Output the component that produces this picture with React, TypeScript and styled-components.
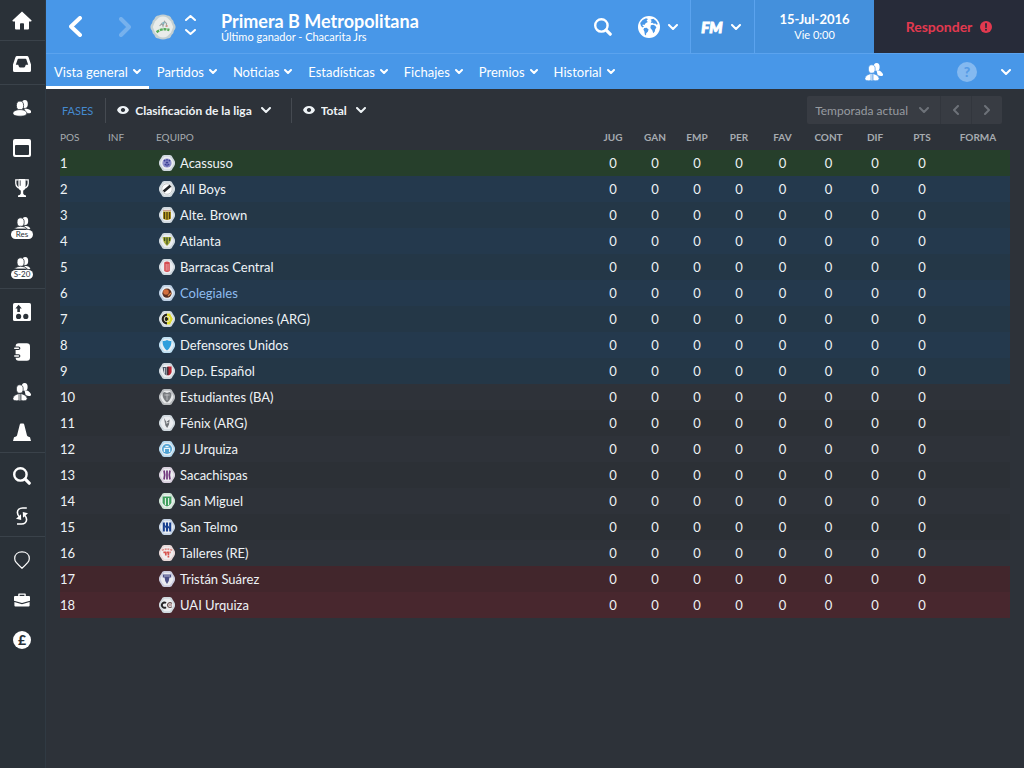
import React from "react";
import styled, { createGlobalStyle, css } from "styled-components";

const color = {
  page: "#2d3239",
  side: "#2a3138",
  line: "#3a424a",
  blue: "#4897e8",
  blueDeep: "#4490dc",
  blueLine: "#5ba3ee",
  ink: "#272b39",
  alert: "#e2394f",
  text: "#eef3f6",
  muted: "#a6abb0",
};

const Global = createGlobalStyle`
  * { box-sizing: border-box; }
  html { background: ${color.page}; }
  body { margin: 0; font-family: Lato, "Liberation Sans", sans-serif; font-size: 13px; color: ${color.text}; }
  button, select { font: inherit; color: inherit; background: none; border: 0; padding: 0; margin: 0; }
  svg { display: block; flex: none; }
`;

const Page = styled.div`
  display: flex;
  min-height: 100vh;
`;

/* ---------- sidebar ---------- */

const Sidebar = styled.nav`
  width: 46px;
  flex: none;
  background: ${color.side};
  border-right: 1px solid #303a43;
`;

const SideGroup = styled.div<{ $first?: boolean; $last?: boolean }>`
  padding-top: ${(p) => (p.$first ? 0 : 3)}px;
  border-bottom: ${(p) => (p.$last ? "0" : `1px solid ${color.line}`)};
`;

const SideButton = styled.button`
  display: flex;
  flex-direction: column;
  align-items: center;
  justify-content: center;
  width: 44px;
  height: 40px;
  color: #fff;
`;

const SquadTag = styled.span`
  width: 22px;
  height: 9px;
  border-radius: 5px;
  background: #fff;
  color: ${color.side};
  font-size: 8px;
  line-height: 9px;
  text-align: center;
`;

/* ---------- header ---------- */

const Main = styled.div`
  flex: 1;
  min-width: 0;
`;

const TopBar = styled.header`
  display: flex;
  height: 54px;
  background: ${color.blue};
  border-bottom: 1px solid ${color.blueLine};
  color: #fff;
`;

const TitleArea = styled.div`
  display: flex;
  align-items: center;
  flex: 1;
  min-width: 0;
  padding-left: 4px;
`;

const IconButton = styled.button<{ $w: number; $faded?: boolean }>`
  display: flex;
  align-items: center;
  justify-content: center;
  gap: 8px;
  width: ${(p) => p.$w}px;
  height: 100%;
  flex: none;
  color: #fff;
  opacity: ${(p) => (p.$faded ? 0.25 : 1)};
`;

const Stepper = styled.div`
  display: flex;
  flex-direction: column;
  width: 28px;
  flex: none;
  padding-bottom: 3px;
`;

const StepButton = styled.button`
  display: flex;
  align-items: center;
  justify-content: center;
  height: 14px;
`;

const Titles = styled.div`
  padding-left: 17px;
  min-width: 0;
`;

const Title = styled.h1`
  margin: 0;
  font-size: 18px;
  line-height: 20px;
  font-weight: 700;
  white-space: nowrap;
`;

const Subtitle = styled.p`
  margin: 0;
  font-size: 11px;
  line-height: 12px;
  white-space: nowrap;
`;

const TopCell = styled.div<{ $w: number }>`
  width: ${(p) => p.$w}px;
  flex: none;
  background: ${color.blueDeep};
  border-left: 1px solid ${color.blueLine};
`;

const DateCell = styled(TopCell)`
  display: flex;
  flex-direction: column;
  align-items: center;
  justify-content: center;
  font-size: 11px;
  line-height: 15px;
`;

const DateText = styled.strong`
  font-size: 13px;
  font-weight: 700;
`;

const Respond = styled.button`
  display: flex;
  align-items: center;
  justify-content: center;
  gap: 8px;
  width: 150px;
  flex: none;
  && {
    background: ${color.ink};
    color: ${color.alert};
    font-size: 14px;
    font-weight: 700;
  }
`;

const TabBar = styled.nav`
  display: flex;
  height: 35px;
  background: ${color.blue};
  color: #fff;
`;

const Tabs = styled.div`
  display: flex;
  flex: 1;
`;

const Tab = styled.button<{ $active?: boolean }>`
  && {
    display: flex;
    align-items: center;
    gap: 5px;
    height: 35px;
    padding: 3px 8px 0;
    border-bottom: 3px solid ${(p) => (p.$active ? "#fff" : "transparent")};
    white-space: nowrap;
  }
`;

/* ---------- toolbar ---------- */

const Toolbar = styled.div`
  display: flex;
  align-items: center;
  height: 28px;
  margin: 7px 22px 2px 14px;
`;

const PhaseLink = styled.a`
  padding: 0 12px 0 2px;
  color: #4489cf;
  font-size: 11px;
  text-decoration: none;
`;

const Picker = styled.label`
  display: flex;
  align-items: center;
  gap: 6px;
  height: 25px;
  padding: 0 20px 0 11px;
  border-left: 1px solid #454a51;
`;

const Select = styled.select`
  appearance: none;
  field-sizing: content;
  && {
    padding-right: 3px;
    font-size: 12px;
    font-weight: 700;
  }
`;

const Season = styled.div`
  display: flex;
  height: 28px;
  margin-left: auto;
  border-radius: 2px;
  background: #383c43;
  color: #6d7279;
`;

const SeasonPicker = styled.label`
  display: flex;
  align-items: center;
  gap: 11px;
  padding: 0 11px 0 8px;
`;

const SeasonSelect = styled.select`
  appearance: none;
  field-sizing: content;
  && {
    color: #979ba0;
    font-size: 12px;
  }
`;

const SeasonStep = styled.button`
  display: flex;
  align-items: center;
  justify-content: center;
  width: 31px;
  && {
    border-left: 1px solid #32363d;
  }
`;

/* ---------- league table ---------- */

const TableWrap = styled.div`
  padding: 0 14px;
`;

const Table = styled.table`
  width: 100%;
  table-layout: fixed;
  border-collapse: collapse;
`;

const Th = styled.th<{ $left?: boolean; $w?: number }>`
  width: ${(p) => (p.$w ? `${p.$w}px` : "auto")};
  height: 24px;
  padding: 0 0 2px;
  color: ${color.muted};
  font-size: 10px;
  font-weight: ${(p) => (p.$left ? 400 : 700)};
  text-align: ${(p) => (p.$left ? "left" : "center")};
`;

type Zone = "up" | "playoff" | "mid" | "down";

const zoneRow = {
  up: css`background: #263f2b;`,
  playoff: css`
    background: #243747;
    &:nth-child(even) { background: #24394d; }
  `,
  mid: css`
    background: #2c3036;
    &:nth-child(even) { background: #2e3239; }
  `,
  down: css`
    background: #42262c;
    &:nth-child(even) { background: #48272e; }
  `,
};

const Row = styled.tr<{ $zone: Zone }>`
  ${(p) => zoneRow[p.$zone]}
`;

const Td = styled.td<{ $center?: boolean }>`
  height: 26px;
  padding: 0;
  text-align: ${(p) => (p.$center ? "center" : "left")};
`;

const TeamLink = styled.a<{ $own?: boolean }>`
  display: flex;
  align-items: center;
  gap: 5px;
  padding-left: 3px;
  color: ${(p) => (p.$own ? "#8fbdf0" : color.text)};
  text-decoration: none;
  white-space: nowrap;
`;

/* ---------- icons ---------- */

type IconProps = { w?: number; h?: number; box: string; children: React.ReactNode };
const Icon = ({ w = 18, h = 18, box, children }: IconProps) => (
  <svg width={w} height={h} viewBox={box} fill="currentColor" aria-hidden="true">{children}</svg>
);

type ChevronProps = { dir?: "down" | "up" | "left" | "right"; w?: number; h?: number; stroke?: number };
const Chevron = ({ dir = "down", w = 10, h = 6, stroke = 2 }: ChevronProps) => {
  const m = stroke / 2;
  const points = {
    down: `${m},${m} ${w / 2},${h - m} ${w - m},${m}`,
    up: `${m},${h - m} ${w / 2},${m} ${w - m},${h - m}`,
    left: `${w - m},${m} ${m},${h / 2} ${w - m},${h - m}`,
    right: `${m},${m} ${w - m},${h / 2} ${m},${h - m}`,
  };
  return (
    <svg width={w} height={h} viewBox={`0 0 ${w} ${h}`} fill="none" stroke="currentColor"
      strokeWidth={stroke} strokeLinecap="round" strokeLinejoin="round" aria-hidden="true">
      <polyline points={points[dir]} />
    </svg>
  );
};

const HomeIcon = () => (
  <Icon w={20} h={19} box="0 0 20 19">
    <path d="M10 0.4 L19.4 9.2 a0.8 0.8 0 0 1 -0.5 1.3 H17 V17.4 a1 1 0 0 1 -1 1 H12 V13 a0.8 0.8 0 0 0 -0.8 -0.8 H8.8 A0.8 0.8 0 0 0 8 13 V18.4 H4 a1 1 0 0 1 -1 -1 V10.5 H1.1 A0.8 0.8 0 0 1 0.6 9.2 Z" />
  </Icon>
);

const InboxIcon = () => (
  <Icon box="0 0 18 18">
    <path fillRule="evenodd" d="M4 1 H14 a1.6 1.6 0 0 1 1.5 1.1 L18 9.4 V15.4 a1.6 1.6 0 0 1 -1.6 1.6 H1.6 A1.6 1.6 0 0 1 0 15.4 V9.4 L2.5 2.1 A1.6 1.6 0 0 1 4 1 Z M5.4 3.8 a0.8 0.8 0 0 0 -0.7 0.5 L2.8 9.8 H5.2 L6 11.8 a1.2 1.2 0 0 0 1.1 0.8 H10.9 a1.2 1.2 0 0 0 1.1 -0.8 L12.8 9.8 H15.2 L13.3 4.3 a0.8 0.8 0 0 0 -0.7 -0.5 Z" />
  </Icon>
);

const UsersIcon = () => (
  <Icon box="0 0 18 16">
    <ellipse cx="11.8" cy="4" rx="3" ry="3.9" />
    <path d="M11.4 8.6 C15 8.6 18.2 10 18.2 11.8 C18.2 13 16 13.6 12.6 13.2 Z" />
    <g stroke={color.side} strokeWidth="0.8">
      <ellipse cx="7" cy="5.6" rx="3.6" ry="4.5" />
      <path d="M7 9.6 C10.6 9.6 13.8 11.2 13.8 13.2 C13.8 15.6 10 16.2 7 16.2 C3.4 16.2 -0.2 15.6 -0.2 13.2 C-0.2 11.2 3.4 9.6 7 9.6 Z" />
    </g>
  </Icon>
);

const SquadIcon = () => (
  <Icon w={18} h={13} box="0 0 18 13">
    <ellipse cx="12.2" cy="4" rx="3" ry="3.9" />
    <path d="M11 8.8 Q16.4 8.8 17.4 12 L13 12.4 Z" />
    <g stroke={color.side} strokeWidth="0.8">
      <ellipse cx="7.6" cy="5.2" rx="3.6" ry="4.4" />
      <path d="M1.4 12 Q3.4 9.2 7.6 9.2 Q12 9.2 14.4 12 Z" />
    </g>
  </Icon>
);

const ScoutIcon = ({ cut }: { cut: string }) => (
  <Icon box="0 0 18 18">
    <ellipse cx="11.6" cy="3.9" rx="3" ry="3.9" />
    <path d="M11.6 7.8 Q14.4 7 16.4 9 Q18.8 11.4 17.8 12.4 Q16 13.6 12.6 12 Z" />
    <g stroke={cut} strokeWidth="0.7">
      <ellipse cx="6.8" cy="6" rx="3.4" ry="4.2" />
      <path d="M6 10.4 V17.6 Q0 18.6 -0.2 15.4 Q0 12 6 10.4 Z" />
      <path d="M8 10.4 V17.6 Q14 18.6 14.2 15.4 Q14 12 8 10.4 Z" />
    </g>
    <path d="M6.9 11 V17.6" stroke="currentColor" strokeWidth="1" />
  </Icon>
);

const CalendarIcon = () => (
  <Icon box="0 0 18 18">
    <path fillRule="evenodd" d="M2 0 H16 a2 2 0 0 1 2 2 V16 a2 2 0 0 1 -2 2 H2 a2 2 0 0 1 -2 -2 V2 A2 2 0 0 1 2 0 Z M3 6 a1 1 0 0 0 -1 1 V15 a1 1 0 0 0 1 1 H15 a1 1 0 0 0 1 -1 V7 a1 1 0 0 0 -1 -1 Z" />
  </Icon>
);

const TrophyIcon = () => (
  <Icon w={14} h={18} box="0 0 14 18">
    <path d="M3.4 0 H10.6 V6.4 Q10.6 10.6 8.2 11.6 V14.4 Q8.4 15.6 11 16.6 V18 H3 V16.6 Q5.6 15.6 5.8 14.4 V11.6 Q3.4 10.6 3.4 6.4 Z" />
    <path d="M3.6 0.8 H0.8 V4.4 Q1.2 8.4 4.6 9.2 M10.4 0.8 H13.2 V4.4 Q12.8 8.4 9.4 9.2" fill="none" stroke="currentColor" strokeWidth="1.3" />
    <path d="M5.2 1.4 V6.8" stroke={color.side} strokeWidth="0.8" />
  </Icon>
);

const TacticsIcon = () => (
  <Icon box="0 0 18 18">
    <rect width="18" height="18" rx="1.6" />
    <g fill={color.side}>
      <path d="M5.6 1.8 L8.8 5.4 H6.9 V9 H4.3 V5.4 H2.4 Z" />
      <circle cx="5.6" cy="13.4" r="2.6" />
      <circle cx="12.8" cy="13.4" r="2.6" />
    </g>
  </Icon>
);

const NotebookIcon = () => (
  <Icon w={16} h={18} box="0 0 16 18">
    <rect x="1.6" y="0.3" width="14.4" height="17.4" rx="3.2" />
    <g fill={color.side}>
      <path d="M0.8 3.4 H4.6 a1.8 1.8 0 0 1 0 3.6 H0.8 Z M0.8 11.2 H4.6 a1.8 1.8 0 0 1 0 3.6 H0.8 Z" />
    </g>
    <path d="M0.8 5.2 H4.4 M0.8 13 H4.4" stroke="currentColor" strokeWidth="1.6" strokeLinecap="round" />
  </Icon>
);

const ConeIcon = () => (
  <Icon box="0 0 18 18">
    <path d="M6.8 1.4 Q7 0.6 7.8 0.6 H10.2 Q11 0.6 11.2 1.4 L14 12.6 Q14.2 13.2 15 13.4 L17 14.2 L18 18 H0 L1 14.2 L3 13.4 Q3.8 13.2 4 12.6 Z" />
  </Icon>
);

const SearchIcon = () => (
  <Icon box="0 0 18 18">
    <g fill="none" stroke="currentColor">
      <circle cx="7.4" cy="7.4" r="6.2" strokeWidth="2.4" />
      <path d="M12.2 12.2 L16.2 16.2" strokeWidth="3.2" strokeLinecap="round" />
    </g>
  </Icon>
);

const SwapIcon = () => (
  <Icon w={12} h={18} box="0 0 12 18">
    <g fill="none" stroke="currentColor" strokeWidth="1.6">
      <path d="M10.8 1 H6.6 C3.2 1 1.4 3.2 1.4 5.4 C1.4 7.2 2.2 8.6 3.6 10" />
      <path d="M1 17 H5.4 C8.8 17 10.6 14.8 10.6 12.6 C10.6 10.8 9.8 9.4 8.4 8" />
    </g>
    <path d="M0 11.8 L5 7.2 L5.2 13 Z M12 6.2 L7 10.8 L6.8 5 Z" />
  </Icon>
);

const PinIcon = () => (
  <Icon w={16} h={18} box="0 0 16 18">
    <path d="M8 17.2 Q5.4 15 2.2 11.4 Q0.7 9.6 0.7 7.4 C0.7 3.4 3.8 0.9 8 0.9 C12.2 0.9 15.3 3.4 15.3 7.4 Q15.3 9.6 13.8 11.4 Q10.6 15 8 17.2 Z" fill="none" stroke="currentColor" strokeWidth="1.2" />
  </Icon>
);

const BriefcaseIcon = () => (
  <Icon w={16} h={14} box="0 0 16 14">
    <path fillRule="evenodd" d="M5 0.4 H11 a0.8 0.8 0 0 1 0.8 0.8 V3 H15 a1 1 0 0 1 1 1 V7.8 L8 10 L0 7.8 V4 a1 1 0 0 1 1 -1 H4.2 V1.2 A0.8 0.8 0 0 1 5 0.4 Z M5.6 1.8 V3 H10.4 V1.8 Z" />
    <path d="M0.4 9 L8 11.2 L15.6 9 V12.6 a1 1 0 0 1 -1 1 H1.4 a1 1 0 0 1 -1 -1 Z" />
  </Icon>
);

const Coin = styled.span`
  width: 18px;
  height: 18px;
  border-radius: 50%;
  background: #fff;
  color: ${color.side};
  font-size: 14px;
  line-height: 18px;
  font-weight: 900;
  text-align: center;
`;

const GlobeIcon = () => (
  <Icon w={22} h={22} box="0 0 22 22">
    <circle cx="11" cy="11" r="11" />
    <g fill={color.blue}>
      <path d="M2.2 7 L4.6 4 L8 2.2 L10 3 L8.6 4.6 L9.8 6 L7.6 7.2 L6.4 9 L4.8 8.4 L4.4 9.6 L6 10.6 L4.6 11.6 L3 10 Z" />
      <path d="M6.2 12 L8.6 11.8 L10.6 13.4 L9.8 15.8 L8.2 17.2 L8 19.6 L6.8 18.6 L6.4 15.4 L5.4 13.6 Z" />
      <path d="M12.6 3.4 L15.4 2.8 L18.2 5 L19.8 8 L18.8 8.8 L17.4 7.4 L15.8 7.8 L14.4 6.8 L12.8 7 L13.6 5 Z" />
      <path d="M12.8 9.2 L15.2 8.8 L17.2 9.8 L18.4 11.6 L17.2 13.2 L16.8 15.6 L15.2 17.2 L14.4 14.4 L12.4 12 Z" />
    </g>
  </Icon>
);

const Brand = styled.span`
  font-size: 15px;
  line-height: 16px;
  font-weight: 900;
  font-style: italic;
  -webkit-text-stroke: 1px #fff;
`;

const EyeIcon = () => (
  <Icon w={12} h={8} box="0 0 12 8">
    <path fillRule="evenodd" d="M6 0 Q10.4 0 12 4 Q10.4 8 6 8 Q1.6 8 0 4 Q1.6 0 6 0 Z M6 1.9 a2.1 2.1 0 1 0 0.01 0 Z" />
  </Icon>
);

const AlertIcon = () => (
  <Icon w={12} h={12} box="0 0 12 12">
    <circle cx="6" cy="6" r="6" />
    <path d="M5 2.2 H7 L6.7 7 H5.3 Z" fill={color.ink} />
    <circle cx="6" cy="8.8" r="1" fill={color.ink} />
  </Icon>
);

const HelpDot = styled.span`
  width: 20px;
  height: 20px;
  border-radius: 50%;
  background: #84b9f0;
  color: #559be6;
  font-size: 14px;
  line-height: 20px;
  font-weight: 900;
`;

const LeagueBadge = () => (
  <svg width="26" height="26" viewBox="0 0 26 26" aria-hidden="true">
    <path d="M8.6 1.4 Q13 -0.6 17.4 1.4 Q20.6 1.4 21.6 5 Q24 6.6 23.8 9 Q27.4 13 23.8 17 Q24 19.4 21.6 21 Q20.6 24.6 17.4 24.6 Q13 26.6 8.6 24.6 Q5.4 24.6 4.4 21 Q2 19.4 2.2 17 Q-1.4 13 2.2 9 Q2 6.6 4.4 5 Q5.4 1.4 8.6 1.4 Z" fill="#c3cfd1" />
    <path d="M9 3.4 Q13 1.6 17 3.4 L21 7.4 L23.2 13 L21 18.6 L17 22.6 Q13 24.4 9 22.6 L5 18.6 L2.8 13 L5 7.4 Z" fill="#e9ecea" />
    <path d="M6.6 18.2 Q12 13.8 19.4 16" stroke="#58ad5c" strokeWidth="2.4" fill="none" strokeDasharray="3 0.8" />
    <path d="M9.6 12 L12 9.4 L13 12.2 L14.4 7.4 L16.6 9.6 L16 13" stroke="#9aa4a5" strokeWidth="1.1" fill="none" />
    <circle cx="16.8" cy="12" r="1" fill="#d2907f" />
    <circle cx="13.4" cy="9" r="1" fill="#77b6c4" />
  </svg>
);

const Crest = ({ tint = "#cfd8de", children }: { tint?: string; children: React.ReactNode }) => (
  <svg width="16" height="16" viewBox="0 0 16 16" aria-hidden="true">
    <path d="M5 0 H11 Q13 0.2 13.6 2.4 Q16.2 6 16.2 8 Q16.2 10 13.6 13.6 Q13 15.8 11 16 H5 Q3 15.8 2.4 13.6 Q-0.2 10 -0.2 8 Q-0.2 6 2.4 2.4 Q3 0.2 5 0 Z" fill={tint} />
    <path d="M5.4 1.8 H10.6 L13 4.6 L14.6 8 L13 11.4 L10.6 14.2 H5.4 L3 11.4 L1.4 8 L3 4.6 Z" fill="#f1f3f4" opacity="0.8" />
    {children}
  </svg>
);

const crests: Record<string, React.ReactNode> = {
  acassuso: <Crest><circle cx="8" cy="8" r="4.6" fill="#8e90cc" /><path d="M5 5 L11 11 M11 5 L5 11 M8 4 V12" stroke="#3b3f94" strokeWidth="1.3" strokeDasharray="1.8 1" /></Crest>,
  boys: <Crest><circle cx="8" cy="8" r="5.2" fill="#fff" stroke="#b9bcbe" strokeWidth="0.8" /><path d="M4.6 10.6 L11.4 4.8" stroke="#1f2225" strokeWidth="2.6" /></Crest>,
  brown: <Crest><path d="M4 4.4 H12 V11 Q12 12.6 8 13 Q4 12.6 4 11 Z" fill="#b89a1f" /><path d="M4 3.4 H12" stroke="#c98" strokeWidth="1" /><path d="M5.4 5 V12 M8 5 V12.6 M10.6 5 V12" stroke="#4a3c12" strokeWidth="1.2" /></Crest>,
  atlanta: <Crest><path d="M3.6 4 H12.4 Q12.4 9 8 13 Q3.6 9 3.6 4 Z" fill="#a6ad3c" /><path d="M5.6 4.6 V8 M8 4.6 V11.4 M10.6 4.6 V8" stroke="#3b4d27" strokeWidth="1.2" /></Crest>,
  barracas: <Crest><path d="M5.2 3.4 Q8 1.8 10.8 3.4 V12 Q8 14 5.2 12 Z" fill="#d54b4f" /><path d="M7.2 5 V11.6 M9 5 V11.6" stroke="#efb6b6" strokeWidth="0.8" /></Crest>,
  colegiales: <Crest tint="#bccfe4"><circle cx="8" cy="8.2" r="4.6" fill="#5a3022" /><circle cx="7" cy="7" r="2.8" fill="#d4703e" /><path d="M9 11 L12 8" stroke="#e08b4c" strokeWidth="1.2" /></Crest>,
  comunicaciones: <Crest><path d="M8 2.6 A5.4 5.4 0 0 0 8 13.4 Z" fill="#26231c" /><path d="M8 2.6 H11 L13.8 8 L11 13.4 H8 Z" fill="#ddda2c" /><circle cx="8" cy="8" r="2.8" fill="none" stroke="#e6e4c8" strokeWidth="1" /><circle cx="8" cy="8" r="1.2" fill="#26231c" /></Crest>,
  defensores: <Crest tint="#bfe0f3"><path d="M3.6 4 Q6 4.4 8 3 Q10 4.4 12.4 4 Q12.8 10 8 13.4 Q3.2 10 3.6 4 Z" fill="#2f9fdc" /></Crest>,
  espanol: <Crest><path d="M3.6 4 H7.6 V12.6 Q4 11 3.6 4 Z" fill="#4c5866" /><path d="M8.4 3.6 H12.6 V9 Q12 12 8.4 12.6 Z" fill="#b72532" /><path d="M5.6 5 V10.6" stroke="#e8eaec" strokeWidth="0.9" /><path d="M8.8 4 V12" stroke="#23262b" strokeWidth="1.2" /></Crest>,
  estudiantes: <Crest tint="#b9bcbf"><path d="M3.6 4 L5.4 3 L8 4 L10.6 3 L12.4 4 Q13 10 8 13.4 Q3 10 3.6 4 Z" fill="#7a7d81" /><path d="M5.4 6 H10.6 M8 5 V11" stroke="#bfc1c3" strokeWidth="0.9" /></Crest>,
  fenix: <Crest><path d="M5 3 L7.4 7 L10.6 4.4 L10 9.4 L8.2 13 L6.4 10.4 Z" fill="#6f7377" /><path d="M6.8 8 L9.4 7.6" stroke="#fff" strokeWidth="0.9" /></Crest>,
  urquizaJJ: <Crest tint="#b5d8ee"><circle cx="8" cy="8" r="5" fill="#4fa2d3" /><path d="M5.4 11 V7.4 H10.6 V11 M6.4 5.4 H9.6" stroke="#e9f5fb" strokeWidth="1.3" fill="none" /></Crest>,
  sacachispas: <Crest tint="#d8cfdd"><path d="M5 3.4 Q6.4 8 5 12.6 M8 3.4 V12.6 M11 3.4 Q9.6 8 11 12.6" stroke="#70347c" strokeWidth="1.7" fill="none" /></Crest>,
  miguel: <Crest tint="#cfe3d5"><path d="M3.6 3.6 H12.4 V10 Q11 13 8 13.4 Q5 13 3.6 10 Z" fill="#3f9f5e" /><path d="M6.4 5 V12 M9.6 5 V12" stroke="#e7f4ea" strokeWidth="1.1" /></Crest>,
  telmo: <Crest tint="#c6d4e6"><path d="M4.8 3.4 V12.6 M8 3.4 V12.6 M11.2 3.4 V12.6" stroke="#173f8f" strokeWidth="2.1" /><path d="M5 5.6 L8 9.6 M8 6.4 L11 10" stroke="#173f8f" strokeWidth="1.2" /></Crest>,
  talleres: <Crest tint="#e8d8d8"><path d="M3 5.4 Q8 2.8 13 5.4" stroke="#e08a86" strokeWidth="1.6" fill="none" strokeDasharray="2 0.8" /><path d="M4.4 7.4 H11.6 M6.8 7.4 V11 M9.4 7.4 V12.4" stroke="#d8544f" strokeWidth="1.7" strokeDasharray="2.6 0.5" /></Crest>,
  tristan: <Crest tint="#cccde0"><path d="M3.8 3.6 H12.2 V6.6 H10.4 Q10.2 11 8 13 Q5.8 11 5.6 6.6 H3.8 Z" fill="#4b4f86" /><path d="M5 5 H11" stroke="#c9cbe4" strokeWidth="0.8" /></Crest>,
  uai: <Crest><path d="M7 6 A2.6 2.6 0 1 0 7 10.2" stroke="#232427" strokeWidth="1.9" fill="none" /><path d="M12.8 6.6 A2.4 2.4 0 1 0 12.8 9.6" stroke="#6a5452" strokeWidth="1.2" fill="none" /><path d="M9.6 8 H13" stroke="#8e5a56" strokeWidth="1" /></Crest>,
};

/* ---------- data ---------- */

const teams: [string, string, Zone][] = [
  ["Acassuso", "acassuso", "up"],
  ["All Boys", "boys", "playoff"],
  ["Alte. Brown", "brown", "playoff"],
  ["Atlanta", "atlanta", "playoff"],
  ["Barracas Central", "barracas", "playoff"],
  ["Colegiales", "colegiales", "playoff"],
  ["Comunicaciones (ARG)", "comunicaciones", "playoff"],
  ["Defensores Unidos", "defensores", "playoff"],
  ["Dep. Español", "espanol", "playoff"],
  ["Estudiantes (BA)", "estudiantes", "mid"],
  ["Fénix (ARG)", "fenix", "mid"],
  ["JJ Urquiza", "urquizaJJ", "mid"],
  ["Sacachispas", "sacachispas", "mid"],
  ["San Miguel", "miguel", "mid"],
  ["San Telmo", "telmo", "mid"],
  ["Talleres (RE)", "talleres", "mid"],
  ["Tristán Suárez", "tristan", "down"],
  ["UAI Urquiza", "uai", "down"],
];

const stats: [string, number][] = [
  ["JUG", 42], ["GAN", 42], ["EMP", 42], ["PER", 42],
  ["FAV", 45], ["CONT", 47], ["DIF", 46], ["PTS", 48],
];

const tabs = ["Vista general", "Partidos", "Noticias", "Estadísticas", "Fichajes", "Premios", "Historial"];

const sideGroups: [string, React.ReactNode][][] = [
  [["Inicio", <HomeIcon />]],
  [["Bandeja de entrada", <InboxIcon />]],
  [
    ["Plantilla", <UsersIcon />],
    ["Calendario", <CalendarIcon />],
    ["Competiciones", <TrophyIcon />],
    ["Reservas", <><SquadIcon /><SquadTag>Res</SquadTag></>],
    ["Sub-20", <><SquadIcon /><SquadTag>S-20</SquadTag></>],
  ],
  [
    ["Tácticas", <TacticsIcon />],
    ["Informe", <NotebookIcon />],
    ["Ojeadores", <ScoutIcon cut={color.side} />],
    ["Entrenamiento", <ConeIcon />],
  ],
  [
    ["Buscar jugadores", <SearchIcon />],
    ["Traspasos", <SwapIcon />],
  ],
  [
    ["Club", <PinIcon />],
    ["Directiva", <BriefcaseIcon />],
    ["Finanzas", <Coin>£</Coin>],
  ],
];

export default function App() {
  return (
    <>
      <Global />
      <Page>
        <Sidebar aria-label="Principal">
          {sideGroups.map((group, i) => (
            <SideGroup key={i} $first={i === 0} $last={i === sideGroups.length - 1}>
              {group.map(([label, icon]) => (
                <SideButton key={label} aria-label={label}>{icon}</SideButton>
              ))}
            </SideGroup>
          ))}
        </Sidebar>

        <Main>
          <TopBar>
            <TitleArea>
              <IconButton $w={50} aria-label="Atrás">
                <Chevron dir="left" w={13} h={21} stroke={4} />
              </IconButton>
              <IconButton $w={50} $faded aria-label="Adelante">
                <Chevron dir="right" w={12} h={20} stroke={4} />
              </IconButton>
              <LeagueBadge />
              <Stepper>
                <StepButton aria-label="Anterior"><Chevron dir="up" w={11} h={6} /></StepButton>
                <StepButton aria-label="Siguiente"><Chevron w={11} h={6} /></StepButton>
              </Stepper>
              <Titles>
                <Title>Primera B Metropolitana</Title>
                <Subtitle>Último ganador - Chacarita Jrs</Subtitle>
              </Titles>
            </TitleArea>
            <IconButton $w={44} aria-label="Buscar"><SearchIcon /></IconButton>
            <IconButton $w={65} aria-label="Mundo"><GlobeIcon /><Chevron w={10} h={6} /></IconButton>
            <TopCell $w={64}>
              <IconButton $w={60} aria-label="Menú FM"><Brand>FM</Brand><Chevron w={10} h={6} /></IconButton>
            </TopCell>
            <DateCell $w={120}>
              <DateText>15-Jul-2016</DateText>
              <span>Vie 0:00</span>
            </DateCell>
            <Respond>Responder <AlertIcon /></Respond>
          </TopBar>

          <TabBar aria-label="Secciones">
            <Tabs>
              {tabs.map((tab, i) => (
                <Tab key={tab} $active={i === 0}>{tab}<Chevron w={8} h={5} /></Tab>
              ))}
            </Tabs>
            <IconButton $w={144} aria-label="Ojear"><ScoutIcon cut={color.blue} /></IconButton>
            <IconButton $w={42} aria-label="Ayuda"><HelpDot>?</HelpDot></IconButton>
            <IconButton $w={36} aria-label="Más"><Chevron w={10} h={6} /></IconButton>
          </TabBar>

          <Toolbar>
            <PhaseLink href="#fases">FASES</PhaseLink>
            <Picker>
              <EyeIcon />
              <Select aria-label="Vista"><option>Clasificación de la liga</option></Select>
              <Chevron w={10} h={6} />
            </Picker>
            <Picker>
              <EyeIcon />
              <Select aria-label="Ámbito"><option>Total</option></Select>
              <Chevron w={10} h={6} />
            </Picker>
            <Season>
              <SeasonPicker>
                <SeasonSelect aria-label="Temporada"><option>Temporada actual</option></SeasonSelect>
                <Chevron w={10} h={6} />
              </SeasonPicker>
              <SeasonStep aria-label="Temporada anterior"><Chevron dir="left" w={6} h={10} /></SeasonStep>
              <SeasonStep aria-label="Temporada siguiente"><Chevron dir="right" w={6} h={10} /></SeasonStep>
            </Season>
          </Toolbar>

          <TableWrap>
            <Table>
              <thead>
                <tr>
                  <Th $left $w={48}>POS</Th>
                  <Th $left $w={48}>INF</Th>
                  <Th $left>EQUIPO</Th>
                  {stats.map(([name, width]) => <Th key={name} $w={width}>{name}</Th>)}
                  <Th $w={64}>FORMA</Th>
                </tr>
              </thead>
              <tbody>
                {teams.map(([name, crest, zone], i) => (
                  <Row key={name} $zone={zone}>
                    <Td>{i + 1}</Td>
                    <Td />
                    <Td><TeamLink href="#equipo" $own={name === "Colegiales"}>{crests[crest]}{name}</TeamLink></Td>
                    {stats.map(([stat]) => <Td key={stat} $center>0</Td>)}
                    <Td />
                  </Row>
                ))}
              </tbody>
            </Table>
          </TableWrap>
        </Main>
      </Page>
    </>
  );
}
